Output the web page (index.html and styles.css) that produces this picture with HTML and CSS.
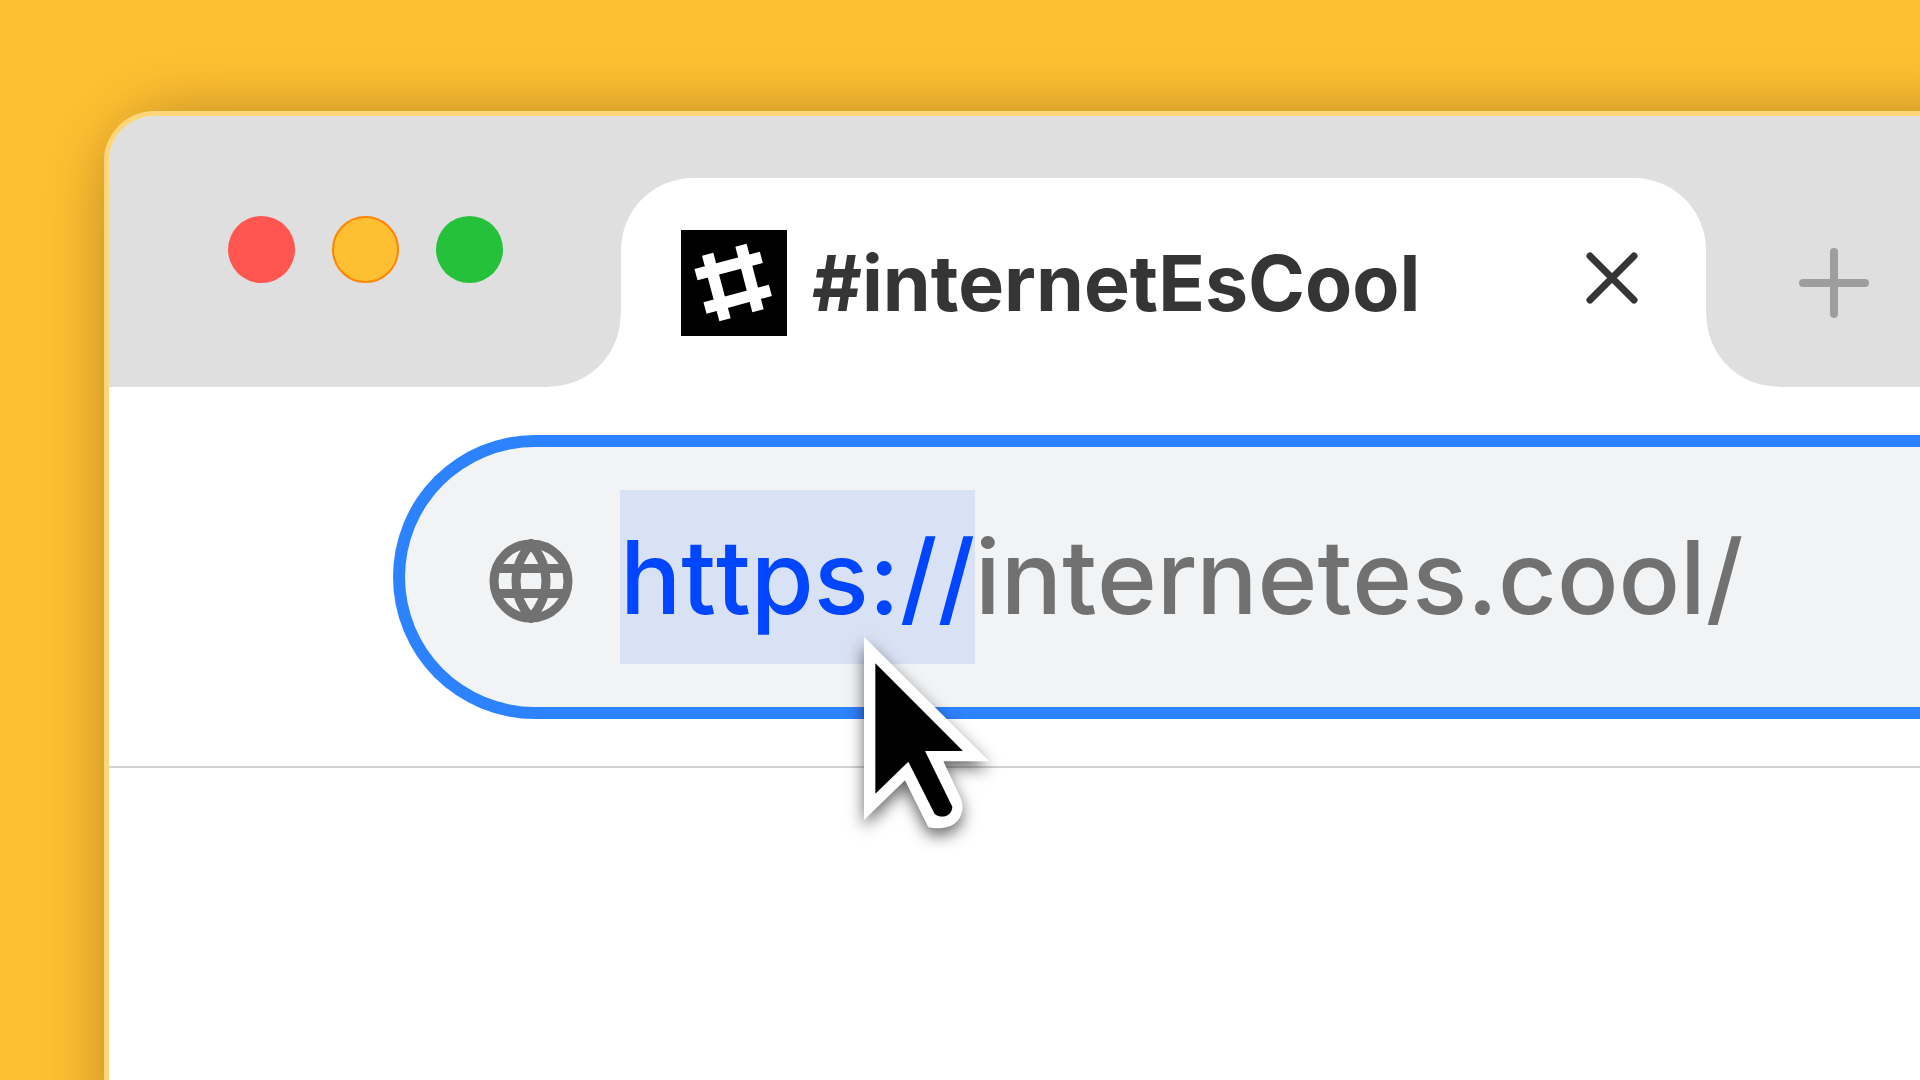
FILE: index.html
```html
<!DOCTYPE html>
<html lang="es">
<head>
  <meta charset="UTF-8">
  <meta name="viewport" content="width=device-width, initial-scale=1.0">
  <title>#internetEsCool</title>
  <link rel="stylesheet" href="styles.css">
</head>
<body>
  <main class="window">
    <header class="tab-strip">
      <div class="lights">
        <button class="light red" aria-label="Cerrar ventana"></button>
        <button class="light yellow" aria-label="Minimizar"></button>
        <button class="light green" aria-label="Maximizar"></button>
      </div>

      <div class="tab">
        <svg class="favicon" viewBox="0 0 318 318" aria-hidden="true">
          <rect width="318" height="318"/>
          <path d="M45 134L241 82M72 234L268 181M80 73L132 269M180 46L231 242"/>
        </svg>
        <h1 class="tab-title">#internetEsCool</h1>
        <button class="tab-close" aria-label="Cerrar pestaña">
          <svg viewBox="0 0 52 52"><path d="M4 4L48 48M48 4L4 48"/></svg>
        </button>
      </div>

      <button class="new-tab" aria-label="Nueva pestaña">
        <svg viewBox="0 0 70 70"><path d="M35 4V66M4 35H66"/></svg>
      </button>
    </header>

    <div class="toolbar">
      <label class="address">
        <svg class="globe" viewBox="0 0 84 84" aria-hidden="true">
          <circle cx="42" cy="42" r="37"/>
          <path d="M42 5C22 28 22 56 42 79C62 56 62 28 42 5Z"/>
          <path d="M9 29.500H75M9 54.500H75"/>
        </svg>
        <input class="url" id="url" type="text" value="https://internetes.cool/" aria-label="Dirección" spellcheck="false">
      </label>
    </div>
  </main>

  <svg class="cursor" viewBox="0 0 540 750" aria-hidden="true">
    <path fill="#fff" d="M72 80V630L195 511L265 652C320 662 365 645 368 590Q368 578 362 564L310 454H448Z"/>
    <path d="M106 160V551L205 455L284 612C306 628 336 618 337 590L255 423H369Z"/>
  </svg>

  <script>
    // leave the protocol selected
    const url = document.getElementById("url");
    url.focus();
    url.setSelectionRange(0, "https://".length);
  </script>
</body>
</html>
```
FILE: styles.css
```css
* {
  margin: 0;
  padding: 0;
  box-sizing: border-box;
}

body {
  display: flex;
  min-height: 100vh;
  padding: 111px 0 0 104px;
  overflow: hidden;
  background: #ffbf32;
  font-family: Inter, "Liberation Sans", sans-serif;
}

button {
  border: none;
  background: none;
  cursor: pointer;
}

svg {
  display: block;
}

.window {
  flex: 1;
  min-width: 0;
  background: #fff;
  background-clip: padding-box;
  border: 5px solid #ffd67a;
  border-width: 5px 0 0 5px;
  border-radius: 50px 0 0 0;
  box-shadow: 30px 30px 60px 30px rgba(0, 0, 0, 0.27);
}

/* tabs */
.tab-strip {
  display: flex;
  padding: 62px 51px 0 119px;
  background: #dfdfdf;
  border-radius: 45px 0 0 0;
}

.lights {
  display: flex;
  gap: 37px;
  padding-top: 38px;
  margin-right: 118px;
}

.light {
  width: 67px;
  height: 67px;
  border-radius: 50%;
}

.red {
  background: #ff5652;
}

.yellow {
  background: #ffbf32;
  border: 2px solid #ff8500;
}

.green {
  background: #26c13b;
}

.tab {
  position: relative;
  display: flex;
  flex: 1;
  align-items: center;
  min-width: 0;
  height: 209px;
  padding: 0 68px 0 60px;
  background: #fff;
  border-radius: 72px 72px 0 0;
}

/* curved feet of the active tab */
.tab::before,
.tab::after {
  content: "";
  position: absolute;
  bottom: 0;
  width: 72px;
  height: 72px;
}

.tab::before {
  right: 100%;
  background: radial-gradient(circle at 0 0, #dfdfdf 71px, #fff 72px);
}

.tab::after {
  left: 100%;
  background: radial-gradient(circle at 100% 0, #dfdfdf 71px, #fff 72px);
}

.favicon {
  flex: none;
  width: 106px;
  height: 106px;
  stroke: #fff;
  stroke-width: 35;
}

.favicon rect {
  stroke: none;
}

.tab-title {
  margin-left: 25px;
  color: #353535;
  font-size: 77px;
  font-weight: 700;
  line-height: 92px;
}

.tab-close {
  width: 52px;
  height: 62px;
  margin-left: auto;
  padding-bottom: 10px;
}

.tab-close svg {
  fill: none;
  stroke: #353535;
  stroke-width: 7;
  stroke-linecap: round;
}

.new-tab {
  align-self: center;
  width: 70px;
  margin-left: 93px;
}

.new-tab svg {
  fill: none;
  stroke: #9e9e9e;
  stroke-width: 8;
  stroke-linecap: round;
}

/* address bar */
.toolbar {
  padding: 48px 0 47px 284px;
  border-bottom: 2px solid #d2d2d2;
}

.address {
  display: flex;
  align-items: center;
  height: 284px;
  padding-left: 84px;
  background: #f1f3f5;
  border: 12px solid #2d82ff;
  border-right: none;
  border-radius: 142px 0 0 142px;
}

.globe {
  flex: none;
  width: 84px;
  height: 84px;
  margin-top: 8px;
  fill: none;
  stroke: #717171;
  stroke-width: 9;
}

.url {
  flex: 1;
  min-width: 0;
  height: 174px;
  margin-left: 47px;
  border: none;
  outline: none;
  background: none;
  color: #717171;
  caret-color: transparent;
  font-family: inherit;
  font-size: 102px;
  font-weight: 500;
  font-kerning: none;
  font-variant-ligatures: none;
  line-height: 174px;
}

.url::selection {
  color: #0045ff;
  background: rgba(217, 225, 244, 0.99);
}

.cursor {
  position: absolute;
  top: 610px;
  left: 840px;
  width: 180px;
  height: 250px;
  overflow: visible;
  filter: drop-shadow(0 7px 8px rgba(0, 0, 0, 0.6));
  pointer-events: none;
}
```
